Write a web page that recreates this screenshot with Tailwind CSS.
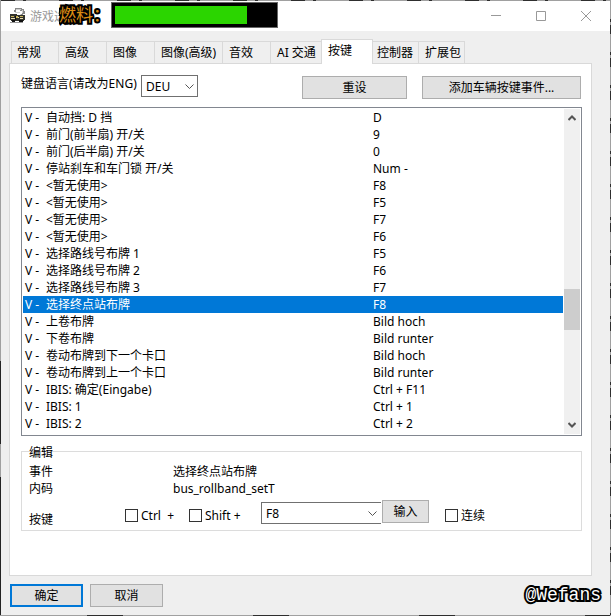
<!DOCTYPE html>
<html lang="zh-CN">
<head>
    <meta charset="UTF-8">
    <meta name="viewport" content="width=device-width, initial-scale=1.0">
    <title>游戏选项</title>
    <script src="https://cdn.jsdelivr.net/npm/@tailwindcss/browser@4"></script>
</head>
<body class="bg-[#efefef] text-black text-[12px] leading-[17px] font-['Noto_Sans','Noto_Sans_CJK_SC',sans-serif]">
    <div class="relative min-h-screen flex flex-col border border-[#a0a0a0]">
        <!-- desktop showing through along the window edge -->
        <div class="absolute -top-px inset-x-0 h-px bg-[repeating-linear-gradient(90deg,#2e2e2e_0_14px,#a0a0a0_14px_22px,#2e2e2e_22px_25px,#a0a0a0_25px_58px)]"></div>
        <div class="absolute -left-px top-[360px] bottom-0 w-px bg-[linear-gradient(#242424_0_83px,#a0a0a0_83px_116px,#242424_116px)]"></div>
        <div class="absolute -right-px inset-y-0 w-px bg-[repeating-linear-gradient(#a0a0a0_0_18px,#2e2e2e_18px_21px,#a0a0a0_21px_24px,#2e2e2e_24px_33px)]"></div>
        <div class="absolute -bottom-px inset-x-0 h-px bg-[repeating-linear-gradient(90deg,#a0a0a0_0_86px,#2e2e2e_86px_122px,#a0a0a0_122px_166px)]"></div>

        <!-- title bar -->
        <header class="relative h-[30px] shrink-0 bg-white flex items-center pl-[9px]">
            <svg class="w-4 h-4" viewBox="0 0 16 16" shape-rendering="crispEdges" aria-hidden="true">
                <path fill="#8a8a8a" d="M5 0h7v1h2v2h1v3h-2v2h-2V6h1V3h-2V2H6v2H4V2h1z"/>
                <path fill="#d0d0d0" d="M6 1h5v1H6zM12 2h1v3h-1zM10 6h1v1h-1zM5 4h5v1H5z"/>
                <path fill="#33332c" d="M0 6h7v1h8v5h-1v1H1v-1H0z"/>
                <path fill="#c9b45a" d="M1 8h3v1H1zM6 8h2v2H6zM10 8h3v1h-3z"/>
                <path fill="#e8dfb0" d="M1 10h4v1H1zM8 9h1v1H8zM10 10h3v1h-3z"/>
                <path fill="#111" d="M2 12h3v2H2zM9 12h4v2H9zM5 8h1v4H5z"/>
                <path fill="#9a9a9a" d="M0 14h13v1H0z"/>
            </svg>
            <span class="ml-1 text-[#999]">游戏选</span>
            <div class="absolute left-[58px] top-px flex items-center">
                <span class="w-[52px] text-[17px] leading-6 whitespace-nowrap overflow-hidden text-[#dc8c14] [-webkit-text-stroke:4px_black] [paint-order:stroke_fill]">燃料：</span>
                <div class="w-[167px] h-[26px] border border-[#666] bg-black p-[3px]">
                    <div class="h-[18px] bg-[#2bd500]" style="width: 83%"></div>
                </div>
            </div>
            <div class="ml-auto pr-px flex text-[#999]">
                <button type="button" aria-label="最小化" class="w-[46px] h-[30px] flex items-center justify-center">
                    <svg class="w-[10px] h-[10px]" viewBox="0 0 10 10" fill="none" stroke="currentColor"><path d="M0 4.500h10"/></svg>
                </button>
                <button type="button" aria-label="最大化" class="w-[44px] h-[30px] flex items-center justify-center">
                    <svg class="w-[10px] h-[10px]" viewBox="0 0 10 10" fill="none" stroke="currentColor"><path d="M.5.5h9v9h-9z"/></svg>
                </button>
                <button type="button" aria-label="关闭" class="w-[46px] h-[30px] flex items-center justify-center">
                    <svg class="w-[10px] h-[10px]" viewBox="0 0 10 10" fill="none" stroke="currentColor"><path d="M0 0l10 10M10 0L0 10"/></svg>
                </button>
            </div>
        </header>

        <main class="grow flex flex-col pl-2 pr-[18px] pt-2">
            <!-- tabs -->
            <div role="tablist" class="flex items-end pl-0.5 -mb-px relative">
                <button type="button" role="tab" class="w-12 h-[23px] border border-[#d9d9d9] pl-[5px] text-left">常规</button>
                <button type="button" role="tab" class="w-[49px] -ml-px h-[23px] border border-[#d9d9d9] pl-[6px] text-left">高级</button>
                <button type="button" role="tab" class="w-[49px] -ml-px h-[23px] border border-[#d9d9d9] pl-[6px] text-left">图像</button>
                <button type="button" role="tab" class="w-[69px] -ml-px h-[23px] border border-[#d9d9d9] pl-[6px] text-left whitespace-nowrap">图像(高级)</button>
                <button type="button" role="tab" class="w-[49px] -ml-px h-[23px] border border-[#d9d9d9] pl-[6px] text-left">音效</button>
                <button type="button" role="tab" class="w-[52px] -ml-px h-[23px] border border-[#d9d9d9] pl-[6px] text-left whitespace-nowrap">AI 交通</button>
                <button type="button" role="tab" aria-selected="true" class="w-[52px] -ml-px h-[25px] border border-b-0 border-[#d9d9d9] bg-white pl-[6px] pb-1 text-left">按键</button>
                <button type="button" role="tab" class="w-[47px] -ml-px h-[23px] border border-[#d9d9d9] pl-1 text-left whitespace-nowrap">控制器</button>
                <button type="button" role="tab" class="w-[47px] -ml-px h-[23px] border border-[#d9d9d9] pl-[6px] text-left whitespace-nowrap">扩展包</button>
            </div>

            <section class="grow bg-white border border-[#d9d9d9] pl-[11px] pr-[9px] pt-[11px]">
                <div class="flex items-start pr-px">
                    <label for="lang" class="whitespace-nowrap w-[118px]">键盘语言(请改为ENG)</label>
                    <div class="relative ml-0.5">
                        <select id="lang" class="appearance-none w-[57px] h-[22px] border border-[#707070] bg-white pl-1">
                            <option>DEU</option>
                            <option>ENG</option>
                        </select>
                        <svg class="absolute right-1 top-[9px] w-[9px] h-[6px] pointer-events-none" viewBox="0 0 9 6" fill="none" stroke="#555"><path d="M.5 .5l4 4 4-4"/></svg>
                    </div>
                    <button type="button" class="ml-auto mt-px w-[105px] h-[23px] bg-[#e1e1e1] border border-[#adadad]">重设</button>
                    <button type="button" class="ml-[15px] mt-px w-[159px] h-[23px] bg-[#e1e1e1] border border-[#adadad]">添加车辆按键事件...</button>
                </div>

                <!-- key bindings -->
                <div class="mt-2 flex items-start border border-[#828790] p-px">
                    <table class="grow table-fixed mb-0.5">
                        <colgroup><col class="w-[348px]"><col></colgroup>
                        <tbody id="bindings"></tbody>
                    </table>
                    <div class="w-4 ml-px self-stretch bg-[#f0f0f0] flex flex-col items-center py-[6px]">
                        <svg class="w-2 h-[6px]" viewBox="0 0 8 6" fill="none" stroke="#555" stroke-width="2"><path d="M.5 5L4 1.500 7.500 5"/></svg>
                        <div class="w-4 h-[41px] mt-[168px] bg-[#cdcdcd]"></div>
                        <svg class="w-2 h-[6px] mt-auto" viewBox="0 0 8 6" fill="none" stroke="#555" stroke-width="2"><path d="M.5 1L4 4.500 7.500 1"/></svg>
                    </div>
                </div>

                <fieldset class="relative mt-[15px] h-[80px] border border-[#dcdcdc] pl-[7px] pt-[11px]">
                    <legend class="absolute left-[7px] -top-2">编辑</legend>
                    <div class="flex"><span class="w-[144px]">事件</span><span>选择终点站布牌</span></div>
                    <div class="flex"><span class="w-[144px]">内码</span><span>bus_rollband_setT</span></div>
                    <div class="flex items-center h-[23px] mt-[3px]">
                        <label for="key" class="w-24 pt-4">按键</label>
                        <label class="flex items-center w-16 gap-[3px] pt-2 whitespace-nowrap"><input type="checkbox" class="appearance-none w-[13px] h-[13px] border border-[#333] bg-white">Ctrl&nbsp; +</label>
                        <label class="flex items-center w-[72px] gap-[3px] pt-2 whitespace-nowrap"><input type="checkbox" class="appearance-none w-[13px] h-[13px] border border-[#333] bg-white">Shift +</label>
                        <div class="relative mt-[3px]">
                            <select id="key" class="appearance-none block w-[120px] h-[22px] border border-r-0 border-[#707070] bg-white pl-1">
                                <option>F8</option>
                            </select>
                            <svg class="absolute right-1 top-[9px] w-[9px] h-[6px] pointer-events-none" viewBox="0 0 9 6" fill="none" stroke="#555"><path d="M.5 .5l4 4 4-4"/></svg>
                        </div>
                        <button type="button" class="ml-px w-[47px] h-[23px] bg-[#e1e1e1] border border-[#adadad]">输入</button>
                        <label class="flex items-center ml-4 gap-[3px] pt-2"><input type="checkbox" class="appearance-none w-[13px] h-[13px] border border-[#333] bg-white">连续</label>
                    </div>
                </fieldset>
            </section>
        </main>

        <footer class="flex gap-[7px] px-[9px] py-2">
            <button type="button" class="w-[73px] h-[23px] bg-[#e1e1e1] border-2 border-[#0078d7]">确定</button>
            <button type="button" class="w-[73px] h-[23px] bg-[#e1e1e1] border border-[#adadad]">取消</button>
            <span class="ml-auto text-[18px] leading-[23px] font-['Liberation_Mono',monospace] text-white [-webkit-text-stroke:4px_black] [paint-order:stroke_fill]">@Wefans</span>
        </footer>
    </div>

    <script>
        const bindings = [
            ['自动挡: D 挡', 'D'],
            ['前门(前半扇) 开/关', '9'],
            ['前门(后半扇) 开/关', '0'],
            ['停站刹车和车门锁 开/关', 'Num -'],
            ['<暂无使用>', 'F8'],
            ['<暂无使用>', 'F5'],
            ['<暂无使用>', 'F7'],
            ['<暂无使用>', 'F6'],
            ['选择路线号布牌 1', 'F5'],
            ['选择路线号布牌 2', 'F6'],
            ['选择路线号布牌 3', 'F7'],
            ['选择终点站布牌', 'F8'],
            ['上卷布牌', 'Bild hoch'],
            ['下卷布牌', 'Bild runter'],
            ['卷动布牌到下一个卡口', 'Bild hoch'],
            ['卷动布牌到上一个卡口', 'Bild runter'],
            ['IBIS: 确定(Eingabe)', 'Ctrl + F11'],
            ['IBIS: 1', 'Ctrl + 1'],
            ['IBIS: 2', 'Ctrl + 2']
        ];
        const selected = 11;

        const body = document.getElementById('bindings');
        bindings.forEach(function([name, key], i) {
            const row = body.insertRow();
            row.className = i === selected ? 'h-[17px] bg-[#0078d7] text-white' : 'h-[17px]';

            const nameCell = row.insertCell();
            nameCell.className = 'p-0 pl-0.5 whitespace-nowrap';
            const prefix = document.createElement('span');
            prefix.className = 'inline-block w-[21px]';
            prefix.textContent = 'V - ';
            nameCell.append(prefix, name);

            const keyCell = row.insertCell();
            keyCell.className = 'p-0 pl-0.5 whitespace-nowrap';
            keyCell.textContent = key;
        });
    </script>
</body>
</html>
